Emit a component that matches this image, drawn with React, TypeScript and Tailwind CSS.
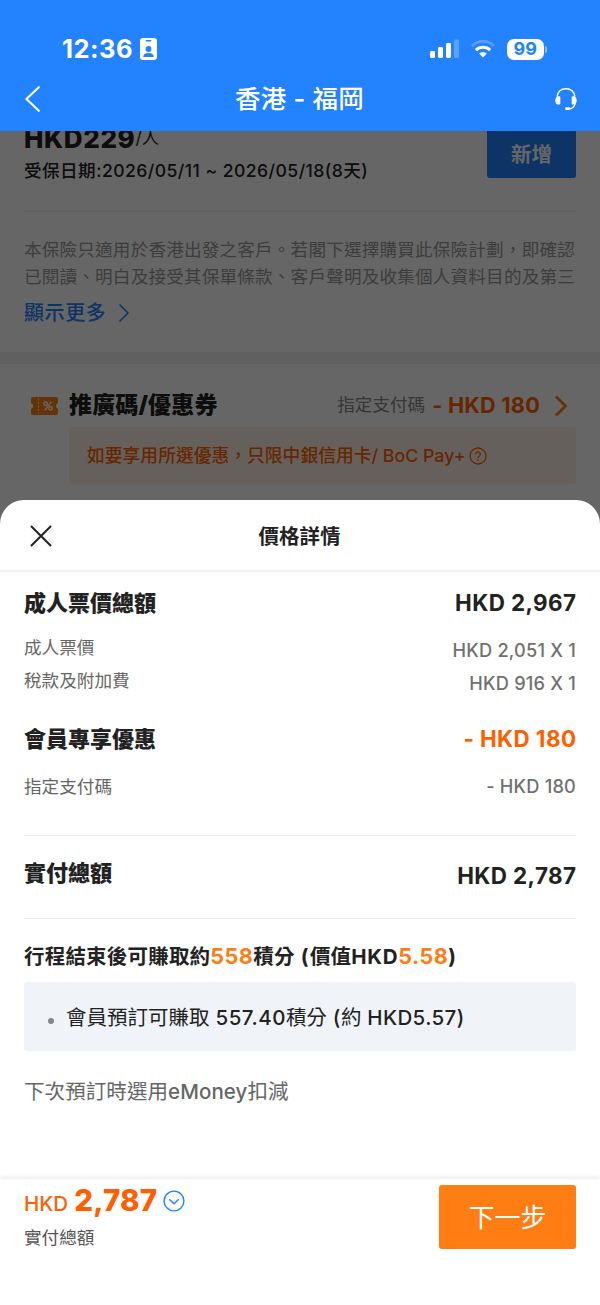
/**
 * Flight checkout screen with the price breakdown sheet open.
 *
 * @description
 * The booking page sits dimmed behind a bottom sheet that lists the fare,
 * member discount, amount payable and points earned. The footer keeps the
 * total and the "next" button in reach.
 */

import type { ReactNode } from "react";
import { clsx } from "clsx";

/** One label / amount line of the breakdown. */
interface PriceRowProps {
  label: string;
  value: string;
  /** Row height and margins */
  className?: string;
  labelClassName?: string;
  valueClassName?: string;
  /** Section heading instead of a detail line */
  heading?: boolean;
}

function PriceRow({
  label,
  value,
  className,
  labelClassName,
  valueClassName,
  heading = false,
}: PriceRowProps) {
  return (
    <div
      className={clsx(
        "flex items-center justify-between whitespace-nowrap",
        heading ? "font-bold" : "font-normal",
        className
      )}
    >
      <span
        className={clsx(
          heading
            ? "text-[22px] font-black text-[#222]"
            : "text-[17.6px] text-[#666]",
          labelClassName
        )}
      >
        {label}
      </span>
      <span
        className={clsx(
          heading
            ? "-mr-[0.4px] text-[22.4px] tracking-[0.4px]"
            : "text-[18.2px] font-medium tracking-[0.2px] text-[#707070]",
          valueClassName ?? (heading && "text-[#222]")
        )}
      >
        {value}
      </span>
    </div>
  );
}

function StatusBar() {
  return (
    <div className="flex h-[68px] items-end justify-between pl-[62px] pr-[53px]">
      <div className="flex h-[38px] items-center">
        <span className="text-[25.5px] font-bold leading-none tracking-[0.5px]">
          12:36
        </span>
        <svg className="ml-[7px]" width="17" height="22" viewBox="0 0 17 22">
          <rect width="17" height="22" rx="3" fill="#fff" />
          <rect x="5.5" y="2" width="6" height="1.6" rx="0.8" fill="#2382fd" />
          <circle cx="8.5" cy="11" r="2.9" fill="#2382fd" />
          <path d="M3.2 19c0-2.8 2.1-4 5.3-4s5.3 1.2 5.3 4z" fill="#2382fd" />
        </svg>
      </div>
      <div className="flex h-[38px] items-center">
        <svg width="30" height="20" viewBox="0 0 30 20" fill="#fff">
          <rect x="0" y="12" width="5" height="7" rx="1.4" />
          <rect x="8" y="8" width="5" height="11" rx="1.4" />
          <rect x="16" y="4" width="5" height="15" rx="1.4" />
          <rect x="24" y="0.5" width="5" height="18.5" rx="1.4" opacity="0.25" />
        </svg>
        <svg className="ml-[10px]" width="26" height="20" viewBox="0 0 26 20">
          <g fill="none" stroke="#fff">
            <path d="M2 6.9a15.8 15.8 0 0 1 22 0" strokeWidth="2.8" opacity="0.25" />
            <path d="M5.9 11.1a10.3 10.3 0 0 1 14.2 0" strokeWidth="3" />
          </g>
          <path d="M13 18.6l-3.9-4a5.7 5.7 0 0 1 7.8 0z" fill="#fff" />
        </svg>
        <div className="ml-[11px] flex h-[21px] w-[37.5px] items-center justify-center rounded-[7px] bg-white text-[18px] font-bold leading-none text-[#2382fd]">
          99
        </div>
        <div className="ml-[1px] h-[7px] w-[2px] rounded-r-full bg-white/50" />
      </div>
    </div>
  );
}

function Header() {
  return (
    <header className="relative z-10 h-[131px] shrink-0 bg-[#2382fd] text-white">
      <StatusBar />
      <div className="flex h-[61px] items-center justify-between pl-[24px] pr-[22px]">
        <svg width="18" height="26" viewBox="0 0 18 26" fill="none" stroke="#fff" strokeWidth="2.1">
          <path d="M14.8 1.2L2.4 13l12.4 11.8" strokeLinecap="round" strokeLinejoin="round" />
        </svg>
        <h1 className="ml-[3px] pt-[1px] text-[25.5px] font-medium tracking-[0.2px]">
          香港 - 福岡
        </h1>
        <svg width="24" height="24" viewBox="0 0 24 24" fill="#fff">
          <path
            d="M3.2 9.6C3.8 4.7 7.2 1.7 12 1.7s8.2 3 8.8 7.9"
            fill="none"
            stroke="#fff"
            strokeWidth="1.4"
          />
          <path d="M21.2 16.5c-.8 3-2.8 5-5.8 5.5" fill="none" stroke="#fff" strokeWidth="1.3" />
          <path d="M4 9.2h1c.8 0 1.3.5 1.3 1.3v5.8c0 .8-.5 1.3-1.3 1.3H4c-1.8-.5-2.7-2-2.7-4.2S2.2 9.7 4 9.2z" />
          <path d="M20 9.2h-1c-.8 0-1.3.5-1.3 1.3v5.8c0 .8.5 1.3 1.3 1.3h1c1.8-.5 2.7-2 2.7-4.2S21.8 9.7 20 9.2z" />
          <rect x="11" y="20.2" width="5.2" height="2.8" rx="1.4" />
        </svg>
      </div>
    </header>
  );
}

function CouponIcon() {
  return (
    <svg width="27" height="18" viewBox="0 0 27 18">
      <path
        d="M2 0h23a2 2 0 0 1 2 2v4a3.2 3.2 0 0 0 0 6v4a2 2 0 0 1-2 2H2a2 2 0 0 1-2-2v-4a3.2 3.2 0 0 0 0-6V2a2 2 0 0 1 2-2z"
        fill="#ff7d13"
      />
      <path d="M7.5 1.5v15" stroke="#fff" strokeWidth="0.8" strokeDasharray="2 1.5" />
      <g fill="none" stroke="#fff" strokeWidth="1.5">
        <circle cx="14.600" cy="6.7" r="1.7" />
        <circle cx="19.6" cy="11.3" r="1.7" />
        <path d="M20.3 4.6l-6.4 8.8" />
      </g>
    </svg>
  );
}

/** Insurance card and promo code row, dimmed by the backdrop. */
function BookingPage() {
  return (
    <div className="relative h-[400px] shrink-0 overflow-hidden bg-white">
      <div className="flex h-[80px] items-start justify-between px-[24px]">
        <div className="whitespace-nowrap text-[#222]">
          <div className="-mt-[8px] flex h-[30px] items-center">
            <span className="text-[26px] font-extrabold tracking-[0.6px]">HKD229</span>
            <span className="text-[17.5px]">/人</span>
          </div>
          <div className="mt-[3px] flex h-[30px] items-center text-[17.6px] font-medium tracking-[0.44px]">
            受保日期:2026/05/11 ~ 2026/05/18(8天)
          </div>
        </div>
        <button className="h-[47px] w-[89px] rounded-b-[3px] bg-[#2382fd] pt-[1px] text-[20.5px] font-bold text-white">
          新增
        </button>
      </div>

      <div className="mx-[24px] border-t border-[#e6e6e6] pt-[24px]">
        <p className="whitespace-nowrap text-[17.6px] leading-[27px] tracking-[0.18px] text-[#999]">
          本保險只適用於香港出發之客戶。若閣下選擇購買此保險計劃，即確認
          <br />
          已閱讀、明白及接受其保單條款、客戶聲明及收集個人資料目的及第三
        </p>
        <div className="mt-[8px] flex h-[30px] items-center text-[20px] font-medium tracking-[0.6px] text-[#2382fd]">
          顯示更多
          <svg className="ml-[12px]" width="12" height="20" viewBox="0 0 12 20" fill="none" stroke="#2382fd" strokeWidth="1.5">
            <path d="M1.5 1.5L10 10l-8.5 8.5" />
          </svg>
        </div>
      </div>

      <div className="mt-[24px] h-[12px] bg-[#efefef]" />

      <div className="pl-[31px] pr-[24px]">
        <div className="flex h-[63px] items-center whitespace-nowrap pt-[20px]">
          <CouponIcon />
          <span className="ml-[11px] text-[23px] font-black tracking-[0.15px] text-[#222]">
            推廣碼/優惠券
          </span>
          <span className="ml-auto text-[17.6px] text-[#888]">指定支付碼</span>
          <span className="ml-[7px] text-[21.7px] font-bold tracking-[0.2px] text-[#ff5f00]">
            - HKD 180
          </span>
          <svg className="ml-[14px] mr-[8px]" width="14" height="22" viewBox="0 0 14 22" fill="none" stroke="#ff7d13" strokeWidth="2.8">
            <path d="M2 1.5l9.5 9.5L2 20.5" />
          </svg>
        </div>
        <div className="ml-[38px] flex h-[57px] items-center whitespace-nowrap rounded-[3px] bg-[#fff0e6] pl-[18px] pt-px text-[17.8px] font-medium text-[#ff5f00]">
          如要享用所選優惠，只限中銀信用卡/ BoC Pay+
          <svg className="mb-px ml-[3px]" width="18" height="18" viewBox="0 0 18 18" fill="none" stroke="#ff5f00" strokeWidth="1.3">
            <circle cx="9" cy="9" r="8" />
            <path d="M6.7 7.2a2.3 2.3 0 1 1 3.4 2c-.8.5-1.1.9-1.1 1.7" />
            <path d="M9 12.3v1.4" />
          </svg>
        </div>
      </div>

      <div className="absolute inset-0 bg-black/60" />
    </div>
  );
}

/** Points figure inside a sentence. */
function Highlight({ children }: { children: ReactNode }) {
  return (
    <span className="text-[21.5px] tracking-[0.5px] text-[#ff7d13]">
      {children}
    </span>
  );
}

function PriceSheet() {
  return (
    <section className="relative -mt-[31px] flex-1 rounded-t-[24px] bg-white">
      <div className="flex h-[72px] items-center border-b-2 border-[#f2f2f2] pl-[30px] pr-[53px] pt-[2px]">
        <svg width="22" height="22" viewBox="0 0 22 22" fill="none" stroke="#222" strokeWidth="2">
          <path d="M1.5 1.5l19 19M20.5 1.5l-19 19" strokeLinecap="round" />
        </svg>
        <h2 className="flex-1 pt-[2px] text-center text-[20.5px] font-bold text-[#222]">
          價格詳情
        </h2>
      </div>

      <div className="px-[24px] pt-[15px]">
        <PriceRow heading label="成人票價總額" value="HKD 2,967" className="h-[32px]" />
        <PriceRow
          label="成人票價"
          value="HKD 2,051 X 1"
          className="mt-[12px] h-[33px]"
          labelClassName="pt-[2px]"
          valueClassName="pt-[6px]"
        />
        <PriceRow
          label="稅款及附加費"
          value="HKD 916 X 1"
          className="h-[33px]"
          labelClassName="pt-[2px]"
          valueClassName="pt-[6px]"
        />
        <PriceRow
          heading
          label="會員專享優惠"
          value="- HKD 180"
          className="mt-[26px] h-[32px]"
          valueClassName="text-[#ff5f00]"
        />
        <PriceRow label="指定支付碼" value="- HKD 180" className="mt-[15px] h-[34px]" />

        <div className="mt-[31px] border-y border-[#ebebeb] pb-[7px]">
          <PriceRow
            heading
            label="實付總額"
            value="HKD 2,787"
            className="h-[75px]"
            valueClassName="pt-[5px] text-[#222]"
          />
        </div>

        <div className="flex h-[63px] items-baseline whitespace-pre pt-[12px] text-[20.5px] font-bold leading-[50px] tracking-[0.2px] text-[#222]">
          行程結束後可賺取約<Highlight>558</Highlight>積分
          <span className="tracking-[1.3px]"> (</span>價值
          <span className="tracking-[0.7px]">HKD</span>
          <Highlight>5.58</Highlight>)
        </div>
        <div className="flex h-[69px] items-center whitespace-pre rounded-[3px] bg-[#f0f4f8] pl-[24px] pt-[3px] text-[20.5px] text-[#222]">
          <span className="mr-[12px] mt-[5px] size-[6px] rounded-full bg-[#888]" />
          會員預訂可賺取
          <span className="font-medium tracking-[0.5px]"> 557.40</span>積分
          <span className="font-medium tracking-[0.5px]"> (</span>約
          <span className="font-medium tracking-[0.4px]"> HKD5.57)</span>
        </div>
        <p className="mt-[26px] text-[20.5px] leading-[30px] tracking-[0.08px] text-[#666]">
          下次預訂時選用<span className="font-medium">eMoney</span>扣減
        </p>
      </div>
    </section>
  );
}

function Footer() {
  return (
    <footer className="relative flex h-[126px] shrink-0 items-start justify-between bg-white px-[24px] shadow-[0_-2px_4px_rgba(0,0,0,0.08)]">
      <div className="text-[#ff5f00]">
        <div className="mt-[3px] flex h-[36px] items-baseline leading-[36px]">
          <span className="text-[20.5px] font-medium">HKD</span>
          <span className="ml-[6px] text-[29.5px] font-extrabold tracking-[0.2px]">2,787</span>
          <svg className="ml-[6px] mt-px self-center" width="22" height="22" viewBox="0 0 22 22" fill="none" stroke="#2382fd" strokeWidth="1.4">
            <circle cx="11" cy="11" r="9.9" />
            <path d="M6.2 9.2l4.8 4.5 4.8-4.5" />
          </svg>
        </div>
        <div className="mt-[5px] text-[17.6px] leading-[30px] text-[#555]">
          實付總額
        </div>
      </div>
      <button className="mt-[6px] h-[64px] w-[137px] rounded-[3px] bg-[#ff7d13] pt-[1px] text-[26px] font-normal text-white">
        下一步
      </button>
    </footer>
  );
}

export default function App() {
  return (
    <div className="mx-auto flex h-[1305px] w-[600px] flex-col overflow-hidden bg-white font-['Inter','Noto_Sans_CJK_TC',sans-serif]">
      <Header />
      <BookingPage />
      <PriceSheet />
      <Footer />
    </div>
  );
}
